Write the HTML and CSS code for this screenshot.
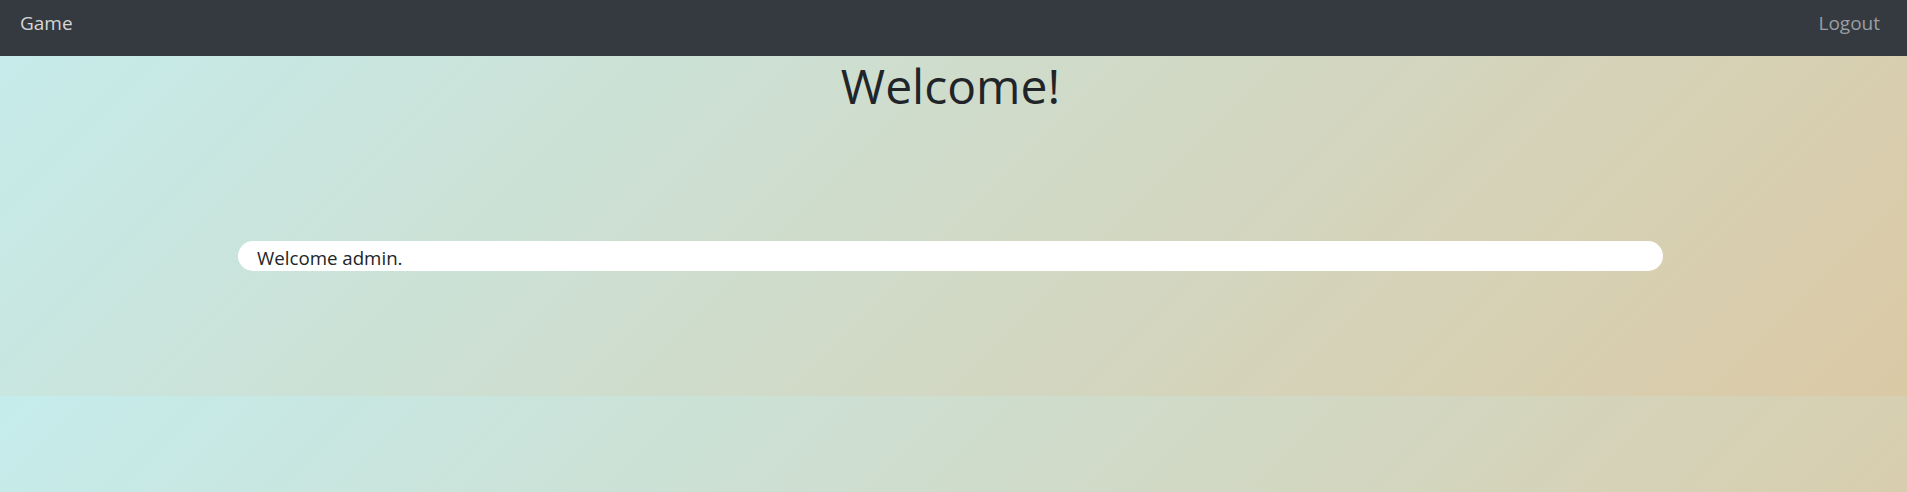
FILE: index.html
```html
<!DOCTYPE html>
<html lang="en">
<head>
<meta charset="utf-8">
<title>Game</title>
<link rel="stylesheet" href="styles.css">
</head>
<body>
<nav class="navbar">
  <a class="brand" href="#">Game</a>
  <a class="nav-link" href="#">Logout</a>
</nav>
<main class="main">
  <h1 class="title">Welcome!</h1>
  <div class="message">Welcome admin.</div>
</main>
</body>
</html>
```
FILE: styles.css
```css
html {
  background: linear-gradient(135deg, #c5ecec, #dbc9a5);
}
body {
  margin: 0;
  font-family: "Open Sans", "Noto Sans", sans-serif;
  color: #212529;
}
.navbar {
  height: 56px;
  background: #343a40;
  display: flex;
  align-items: flex-start;
  justify-content: space-between;
  padding: 10px 27px 0 20px;
  box-sizing: border-box;
}
.brand {
  color: #d6d6d6;
  text-decoration: none;
  font-size: 19px;
  line-height: 26px;
}
.nav-link {
  color: #9b9ea1;
  text-decoration: none;
  font-size: 19px;
  line-height: 26px;
}
.main {
  height: 340px;
  padding: 0 6px 0 0;
  display: flex;
  flex-direction: column;
  align-items: center;
}
.title {
  margin: 0;
  font-weight: 400;
  font-size: 48px;
  line-height: 1.2;
  padding-top: 1px;
}
.message {
  box-sizing: border-box;
  margin-top: 126px;
  width: 1425px;
  height: 30px;
  border-radius: 15px;
  background: #fff;
  padding: 4px 19px 0;
  font-size: 18.7px;
  line-height: 26px;
}
```
